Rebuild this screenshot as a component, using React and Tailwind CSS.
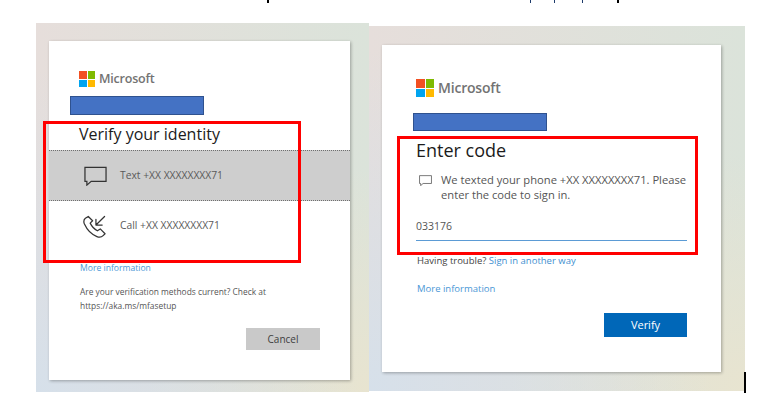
import React from "react";

const font = { fontFamily: '"Open Sans", "Noto Sans", sans-serif' };

function MsLogo({ size, textClass }) {
  return (
    <div className="flex items-center gap-[4px]">
      <div className="grid grid-cols-2 gap-px" style={{ width: size, height: size }}>
        <div className="bg-[#f25022]" />
        <div className="bg-[#7fba00]" />
        <div className="bg-[#00a4ef]" />
        <div className="bg-[#ffb900]" />
      </div>
      <span className={`font-semibold text-[#737373] ${textClass}`}>Microsoft</span>
    </div>
  );
}

function ChatIcon({ className }) {
  return (
    <svg viewBox="0 0 24 20" fill="none" stroke="currentColor" strokeWidth="1.3" className={className}>
      <path d="M1 1h22v14.5H7.5L3 19.5v-4H1z" />
    </svg>
  );
}

function CallIcon({ className }) {
  return (
    <svg viewBox="0 0 24 24" fill="none" stroke="currentColor" strokeWidth="1.3" strokeLinejoin="round" strokeLinecap="round" className={className}>
      <path d="M5.5 1.5 2.5 3.5C.5 5 .5 7 1.5 9.5 4 15 9 20.5 14.5 22.5c2.5 1 5 .5 6.5-1l2-2-5-5-3 2c-3-1.5-6-5-7.5-8l2.5-2.5z" />
      <path d="M22.5 1.5 13.5 10.5M13.5 4.5v6H20" />
    </svg>
  );
}

export default function App() {
  return (
    <div className="relative w-[759px] h-[411px] bg-white overflow-hidden text-[#404040]" style={font}>
      {/* descenders of the caption cropped off above the screenshots */}
      <div className="absolute left-[267px] top-0 w-[2px] h-[3px] bg-black" />
      <div className="absolute left-[530px] top-0 w-px h-[3px] bg-[#1d3b6b]" />
      <div className="absolute left-[554px] top-0 w-px h-[3px] bg-[#1d3b6b]" />
      <div className="absolute left-[582px] top-0 w-px h-[3px] bg-[#1d3b6b]" />
      <div className="absolute left-[617px] top-0 w-[2px] h-[3px] bg-black" />

      <div className="flex pl-[36px] pt-[23px]">
        {/* left screen */}
        <div className="w-[333px] h-[369px] pt-[18px] pl-[13px] bg-[radial-gradient(circle_at_0_100%,#d6e0ea,transparent_65%),radial-gradient(circle_at_100%_100%,#e8e4d0,transparent_45%),linear-gradient(90deg,#e6dedb,#dbe3da)]">
          <div className="w-[301px] h-[339px] bg-white shadow-[1px_1px_3px_rgba(0,0,0,0.3)] flex flex-col">
            <div className="pl-[30px] pt-[30px]">
              <MsLogo size={16} textClass="text-[12.5px] leading-[16px] tracking-[-0.2px]" />
            </div>
            <h1 className="pl-[30px] mt-[35px] text-[16px] leading-[24px] font-medium text-[#1b1b1b]">Verify your identity</h1>
            <div className="mt-[4px] h-[51px] bg-[#cecece] border-y border-dotted border-[#6f6f6f] flex items-center pl-[35px]">
              <ChatIcon className="w-[23px] h-[20px] text-[#333] shrink-0" />
              <span className="ml-[13px] text-[10.3px] text-[#5a5a5a]">Text +XX XXXXXXXX71</span>
            </div>
            <div className="h-[50px] flex items-center pl-[34px]">
              <CallIcon className="w-[23px] h-[23px] text-[#333] shrink-0" />
              <span className="ml-[14px] text-[10.3px] text-[#5a5a5a]">Call +XX XXXXXXXX71</span>
            </div>
            <a className="ml-[31px] mt-[11px] text-[8.6px] leading-[13px] text-[#4a97d6]">More information</a>
            <p className="ml-[31px] mt-[10px] w-[200px] text-[8.4px] leading-[14px] text-[#555]">
              Are your verification methods current? Check at https://aka.ms/mfasetup
            </p>
            <div className="flex justify-end pr-[30px] mt-[15px]">
              <button className="w-[74px] h-[22px] bg-[#c9c9c9] text-[10px] text-[#404040]">Cancel</button>
            </div>
          </div>
        </div>

        {/* right screen */}
        <div className="mt-[3px] w-[376px] h-[365px] pt-[19px] pl-[13px] bg-[radial-gradient(circle_at_0_100%,#d6e0ea,transparent_65%),radial-gradient(circle_at_100%_100%,#e8e4d0,transparent_45%),linear-gradient(90deg,#e6dedb,#dbe3da)]">
          <div className="w-[339px] h-[327px] bg-white shadow-[1px_1px_3px_rgba(0,0,0,0.3)] flex flex-col pl-[34px] pr-[34px]">
            <div className="pt-[34px]">
              <MsLogo size={18} textClass="text-[14px] leading-[18px] tracking-[-0.2px]" />
            </div>
            <h1 className="mt-[41px] text-[18px] leading-[24px] font-medium text-[#1b1b1b]">Enter code</h1>
            <div className="mt-[10px] flex items-start">
              <ChatIcon className="w-[13px] h-[11px] mt-[3px] ml-[3px] shrink-0 text-[#444]" />
              <p className="ml-[9px] text-[11.2px] leading-[15px] text-[#555]">
                We texted your phone +XX XXXXXXXX71. Please enter the code to sign in.
              </p>
            </div>
            <div className="mt-[15px] h-[24px] border-b border-[#5b9bd5] text-[10.5px] leading-[18px] text-[#555]">033176</div>
            <p className="mt-[13px] ml-px text-[9.5px] leading-[13px] text-[#444]">
              Having trouble? <a className="text-[#3f8fd0]">Sign in another way</a>
            </p>
            <a className="mt-[15px] ml-px text-[9.5px] leading-[13px] text-[#4a97d6]">More information</a>
            <div className="flex justify-end mt-[18px]">
              <button className="w-[83px] h-[24px] bg-[#0067b8] text-[11px] font-medium text-white">Verify</button>
            </div>
          </div>
        </div>
      </div>

      {/* annotations pasted over the screenshots */}
      <div className="absolute left-[70px] top-[96px] w-[134px] h-[19px] bg-[#4472c4] border border-[#2f528f]" />
      <div className="absolute left-[413px] top-[113px] w-[134px] h-[18px] bg-[#4472c4] border border-[#2f528f]" />
      <div className="absolute left-[43px] top-[121px] w-[258px] h-[142px] border-[3px] border-[#ff0000]" />
      <div className="absolute left-[397px] top-[136px] w-[301px] h-[119px] border-[3px] border-[#ff0000]" />
      <div className="absolute left-[744px] top-[372px] w-[2px] h-[21px] bg-black" />
    </div>
  );
}
